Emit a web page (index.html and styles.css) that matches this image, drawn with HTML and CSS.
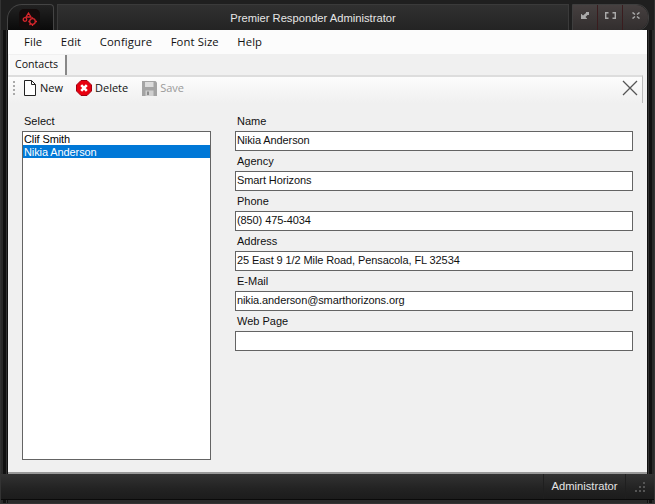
FILE: index.html
```html
<!DOCTYPE html>
<html lang="en">

<head>
    <meta charset="UTF-8">
    <title>Premier Responder Administrator</title>
    <link rel="stylesheet" href="styles.css">
</head>

<body>
    <div class="window">
        <div class="titlebar">
            <div class="logo-tab">
                <div class="logo">
                    <svg width="16" height="16" viewBox="0 0 16 16" fill="none" stroke="#d8262c" stroke-width="1.300">
                        <path d="M6.500 1l2.500 4H4z" />
                        <circle cx="3" cy="7.500" r="1.800" />
                        <circle cx="10.500" cy="9.500" r="2.800" />
                        <path d="M10.500 5.200v1.500M10.500 12.300v1.700M6.300 9.500h1.400M13.300 9.500h1.700M7.500 13l1-1" />
                    </svg>
                </div>
            </div>
            <div class="title">Premier Responder Administrator</div>
            <div class="win-buttons">
                <div class="win-btn">
                    <svg width="8" height="7" viewBox="0 0 8 7" fill="#aaaaaa">
                        <path d="M5 0h3v3H6.500L4.500 5 6 6.500V7H0V2h.5L2 3.500 5 1z" />
                    </svg>
                </div>
                <div class="win-btn">
                    <svg width="11" height="7" viewBox="0 0 11 7" fill="none" stroke="#aaaaaa" stroke-width="1.400">
                        <path d="M3.500 .7H.7v5.600h2.800M7.500 .7h2.800v5.600H7.500" />
                    </svg>
                </div>
                <div class="win-btn last">
                    <svg width="8" height="7" viewBox="0 0 8 7" fill="none" stroke="#aaaaaa" stroke-width="1.500">
                        <path d="M.5 .5l2.500 2M7.500 .5L5 2.500M.5 6.500L3 4.500M7.500 6.500L5 4.500" />
                    </svg>
                </div>
            </div>
        </div>

        <div class="panel">
            <div class="menubar">
                <span class="menu-item">File</span>
                <span class="menu-item">Edit</span>
                <span class="menu-item">Configure</span>
                <span class="menu-item">Font Size</span>
                <span class="menu-item">Help</span>
            </div>
            <div class="tabstrip">
                <div class="tab">Contacts</div>
            </div>
            <div class="toolbar">
                <div class="grip"></div>
                <div class="tool">
                    <svg width="14" height="16" viewBox="0 0 14 16" fill="#fff" stroke="#222">
                        <path d="M1.500 .5h7l4 4v11h-11z" />
                        <path d="M8.500 .5v4h4" fill="none" />
                    </svg>
                    New
                </div>
                <div class="tool">
                    <svg width="16" height="16" viewBox="0 0 16 16">
                        <path d="M5 .5h6L15.500 5v6L11 15.500H5L.5 11V5z" fill="#e8000f" stroke="#a00010" />
                        <path d="M5.200 5.200l5.600 5.600M10.800 5.200l-5.600 5.600" stroke="#fff" stroke-width="2.600" />
                    </svg>
                    Delete
                </div>
                <div class="tool disabled">
                    <svg width="15" height="15" viewBox="0 0 15 15">
                        <path d="M0 0h13.500L15 1.500V15H0z" fill="#a4a4a4" />
                        <path d="M3 1h8.500v5H3z" fill="#dcdcdc" />
                        <path d="M3.500 9.500h8V15h-8z" fill="#d0d0d0" />
                        <path d="M5 10.500h2V14H5z" fill="#8e8e8e" />
                    </svg>
                    Save
                </div>
                <svg class="close-x" width="16" height="16" viewBox="0 0 16 16" stroke="#555" stroke-width="1.300">
                    <path d="M1 1l14 14M15 1L1 15" />
                </svg>
            </div>
            <div class="content">
                <div class="select-col">
                    <div class="field-label">Select</div>
                    <div class="listbox">
                        <div class="list-row">Clif Smith</div>
                        <div class="list-row selected">Nikia Anderson</div>
                    </div>
                </div>
                <div class="fields-col">
                    <div class="field">
                        <div class="field-label">Name</div>
                        <div class="textbox">Nikia Anderson</div>
                    </div>
                    <div class="field">
                        <div class="field-label">Agency</div>
                        <div class="textbox">Smart Horizons</div>
                    </div>
                    <div class="field">
                        <div class="field-label">Phone</div>
                        <div class="textbox">(850) 475-4034</div>
                    </div>
                    <div class="field">
                        <div class="field-label">Address</div>
                        <div class="textbox">25 East 9 1/2 Mile Road, Pensacola, FL 32534</div>
                    </div>
                    <div class="field">
                        <div class="field-label">E-Mail</div>
                        <div class="textbox">nikia.anderson@smarthorizons.org</div>
                    </div>
                    <div class="field">
                        <div class="field-label">Web Page</div>
                        <div class="textbox"></div>
                    </div>
                </div>
            </div>
        </div>

        <div class="statusbar">
            <div class="status-text">Administrator</div>
            <div class="resize-grip">
                <svg width="12" height="12" viewBox="0 0 12 12" fill="#555">
                    <path d="M8 0h2v2H8zM4 4h2v2H4zM8 4h2v2H8zM0 8h2v2H0zM4 8h2v2H4zM8 8h2v2H8z" />
                </svg>
            </div>
        </div>
    </div>
</body>

</html>
```

FILE: styles.css
```css
html,
body {
    margin: 0;
    height: 100%;
    overflow: hidden;
}

body {
    font-family: "Liberation Sans", Arial, sans-serif;
    font-size: 11px;
    color: #000000;
    background-color: #1c1c1c;
}

.window {
    width: 655px;
    height: 504px;
    box-sizing: border-box;
    display: flex;
    flex-direction: column;
    border: 1px solid #333333;
    border-top: 0;
    background-color: #2a2a2a;
    background-image:
        linear-gradient(to right, #2a2a2a 2px, #111111 2px, #111111 5px, #333333 5px, #333333 6px, #111111 6px, #111111 7px, transparent 7px),
        linear-gradient(to left, #2a2a2a 2px, #111111 2px, #111111 5px, #333333 5px, #333333 6px, #111111 6px, #111111 7px, transparent 7px);
}

.titlebar {
    height: 30px;
    display: flex;
    background-color: #1f1f1f;
    color: #e6e6e6;
    padding-top: 4px;
    box-sizing: border-box;
    gap: 3px;
}

.logo-tab {
    width: 47px;
    margin-left: 6px;
    box-sizing: border-box;
    padding: 4px 0 0 11px;
    border: 1px solid #444444;
    border-bottom: 0;
    border-radius: 15px 4px 0 0;
    background: linear-gradient(#222222, #0a0a0a);
}

.logo {
    width: 21px;
    height: 20px;
    padding: 3px 2px 0 3px;
    box-sizing: border-box;
    border-radius: 5px;
    background-color: #140b0b;
}

.title {
    flex: 1;
    text-align: center;
    font-size: 11.2px;
    line-height: 27px;
    border: 1px solid #3a3a3a;
    border-bottom: 0;
    background: linear-gradient(#303030, #242424);
}

.win-buttons {
    display: flex;
    margin-right: 5px;
    height: 25px;
    border: 1px solid #3e3e3e;
    border-radius: 0 12px 12px 0;
}

.win-btn {
    width: 25px;
    display: flex;
    align-items: center;
    justify-content: center;
    box-sizing: border-box;
    padding-bottom: 4px;
    border-right: 1px solid #3a1c1e;
    background: linear-gradient(#464040, #322e2e);
}

.win-btn.last {
    border-right: 0;
    border-radius: 0 12px 12px 0;
}

.panel {
    height: 444px;
    margin: 0 7px;
    display: flex;
    flex-direction: column;
    background-color: #f0f0f0;
    border-bottom: 2px solid #999999;
    box-sizing: border-box;
}

.menubar {
    height: 24px;
    box-sizing: border-box;
    display: flex;
    align-items: center;
    padding: 0 0 2px 7px;
    background-color: #fcfcfc;
    font-family: "Open Sans", sans-serif;
    font-size: 11.3px;
    letter-spacing: .1px;
    color: #111111;
}

.menu-item {
    padding: 0 9px;
    margin-right: .5px;
}

.tabstrip {
    height: 21px;
    display: flex;
    align-items: flex-end;
    background-color: #f0f0f0;
    padding-left: 1px;
}

.tab {
    height: 20px;
    padding: 0 7px 0 5px;
    line-height: 19px;
    font-family: "Open Sans", sans-serif;
    font-size: 10.6px;
    color: #111111;
    background-color: #f8f8f8;
    border-right: 2px solid #888888;
    border-left: 1px solid #ffffff;
}

.toolbar {
    height: 28px;
    display: flex;
    align-items: center;
    box-sizing: border-box;
    margin-right: 4px;
    padding: 0 0 4px 5px;
    border-top: 2px solid #dddddd;
    border-right: 1px solid #bbbbbb;
    background: linear-gradient(#fcfcfc, #f0f0f0);
    font-family: "Open Sans", sans-serif;
    font-size: 11px;
    line-height: 14px;
    color: #111111;
}

.grip {
    width: 2px;
    height: 15px;
    margin-right: 8px;
    background-image: linear-gradient(#aaaaaa 50%, transparent 50%);
    background-size: 2px 4px;
}

.tool {
    display: flex;
    align-items: center;
    gap: 3px;
    margin-right: 13px;
}

.tool:nth-child(3) {
    margin-right: 14px;
}

.tool.disabled {
    color: #9a9a9a;
}

.close-x {
    margin-left: auto;
    margin-right: 4px;
}

.content {
    flex: 1;
    display: flex;
    gap: 24px;
    padding: 11px 14px 12px 14px;
    min-height: 0;
}

.select-col {
    width: 189px;
    display: flex;
    flex-direction: column;
}

.field-label {
    height: 17px;
    line-height: 14px;
    padding-left: 2px;
    color: #111111;
    flex-shrink: 0;
}

.listbox {
    flex: 1;
    background-color: #ffffff;
    border: 1px solid #646464;
}

.list-row {
    height: 13px;
    line-height: 15px;
    padding-left: 1px;
    letter-spacing: -.1px;
}

.list-row.selected {
    background-color: #0078d7;
    color: #ffffff;
}

.fields-col {
    flex: 1;
    display: flex;
    flex-direction: column;
    gap: 3px;
}

.field {
    height: 37px;
}

.textbox {
    height: 20px;
    box-sizing: border-box;
    line-height: 17px;
    padding-left: 1px;
    letter-spacing: -.1px;
    background-color: #ffffff;
    border: 1px solid #646464;
    color: #111111;
    white-space: nowrap;
}

.statusbar {
    height: 25px;
    display: flex;
    justify-content: flex-end;
    align-items: stretch;
    background: linear-gradient(#333333, #222222 60%, #1c1c1c);
    color: #e4e4e4;
    font-size: 11.2px;
    border-bottom: 1px solid #0a0a0a;
}

.status-text {
    width: 81px;
    text-align: center;
    line-height: 25px;
    border-left: 1px solid #1f1f1f;
    border-right: 1px solid #1f1f1f;
}

.resize-grip {
    width: 28px;
    padding: 8px 0 0 9px;
    box-sizing: border-box;
}
```
